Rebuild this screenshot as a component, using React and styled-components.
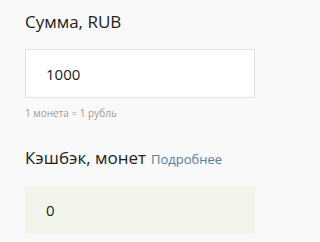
import React from "react";
import styled, { createGlobalStyle } from "styled-components";

const GlobalStyle = createGlobalStyle`
  body {
    margin: 0;
    background: #f9f9f9;
    font-family: "Open Sans", "Noto Sans", sans-serif;
  }
`;

const Form = styled.div`
  display: flex;
  flex-direction: column;
  padding: 11px 16px 0 25px;
  width: 230px;
`;

const Field = styled.div`
  display: flex;
  flex-direction: column;
  margin-bottom: ${(p) => p.gap || 0}px;
`;

const Label = styled.div`
  font-size: 17px;
  line-height: 22px;
  color: #222;
  margin-bottom: 16px;
  white-space: nowrap;
`;

const More = styled.a`
  font-size: 13px;
  color: #5b7a99;
  text-decoration: none;
  margin-left: 5px;
`;

const Box = styled.div`
  height: ${(p) => (p.readonly ? 48 : 49)}px;
  box-sizing: border-box;
  display: flex;
  align-items: center;
  padding-left: 20px;
  font-size: 15px;
  color: #222;
  background: ${(p) => (p.readonly ? "#f1f5eb" : "#fff")};
  border: 1px solid ${(p) => (p.readonly ? "#f1f5eb" : "#e2e2e2")};
`;

const Hint = styled.div`
  font-size: 10px;
  line-height: 14px;
  color: #9a9a9a;
  margin-top: 8px;
`;

export default function App() {
  return (
    <>
      <GlobalStyle />
      <Form>
        <Field gap={27}>
          <Label>Сумма, RUB</Label>
          <Box>1000</Box>
          <Hint>1 монета = 1 рубль</Hint>
        </Field>
        <Field>
          <Label>
            Кэшбэк, монет
            <More href="#">Подробнее</More>
          </Label>
          <Box readonly>0</Box>
        </Field>
      </Form>
    </>
  );
}
